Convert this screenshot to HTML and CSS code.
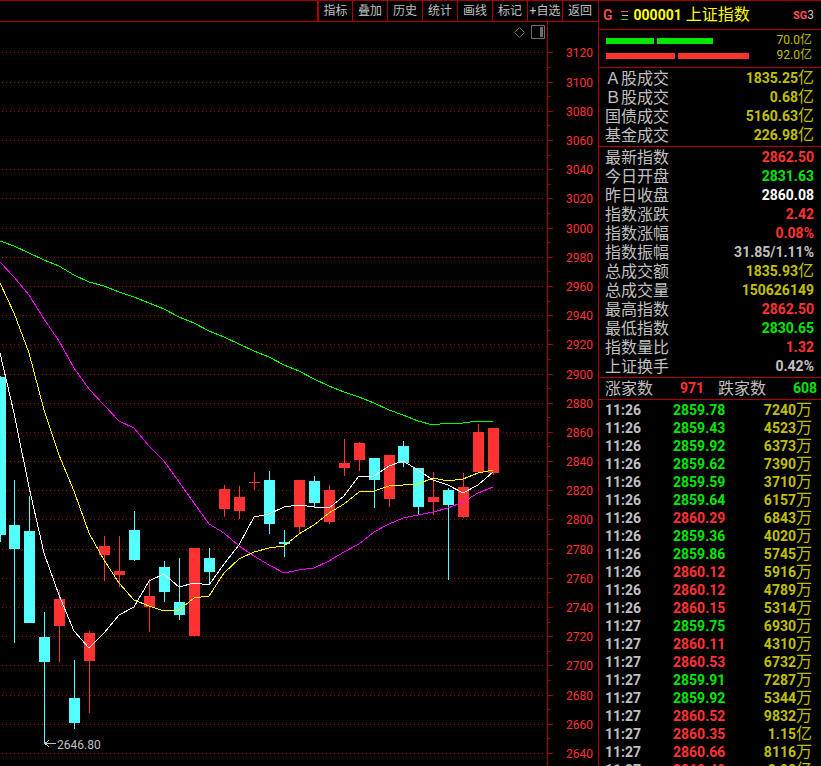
FILE: index.html
```html
<!DOCTYPE html>
<html lang="zh-CN">
<head>
    <meta charset="UTF-8">
    <meta name="viewport" content="width=device-width, initial-scale=1.0">
    <title>000001 上证指数</title>
    <link rel="stylesheet" href="styles.css">
</head>
<body>

<div class="app">
    <main class="main">
        <nav class="toolbar">
            <button>指标</button>
            <button>叠加</button>
            <button>历史</button>
            <button>统计</button>
            <button>画线</button>
            <button>标记</button>
            <button>+自选</button>
            <button>返回</button>
        </nav>
        <div class="chart">
            <svg id="kline" class="kline" viewBox="0 22 598 744" preserveAspectRatio="xMaxYMin meet"></svg>
            <div class="chart-tools">
                <button aria-label="标注">
                    <svg width="11" height="11" viewBox="0 0 11 11"><path d="M5.5 0.5l5 5-5 5-5-5z" fill="none" stroke="#707070"/></svg>
                </button>
                <button aria-label="侧栏">
                    <svg width="14" height="14" viewBox="0 0 14 14"><path d="M.5 .5h13v13H.5z" fill="none" stroke="#707070"/><path d="M9 2h3v10H9z" fill="#707070"/></svg>
                </button>
            </div>
        </div>
    </main>

    <aside class="side">
        <header class="stock">
            <span class="flag">G</span>
            <svg class="menu-icon" width="7" height="9" viewBox="0 0 7 9" shape-rendering="crispEdges">
                <path d="M0 .5h7" stroke="#ff5050"/><path d="M1 4.5h6" stroke="#c0c0c0"/><path d="M0 8.5h7" stroke="#00e600"/>
            </svg>
            <b class="code">000001</b>
            <h1>上证指数</h1>
            <span class="tag"><b>SG</b>3</span>
        </header>

        <section class="power">
            <div class="power-row up-green">
                <div class="bars"><i style="width: 33%"></i><i style="width: 38%"></i></div>
                <span>70.0亿</span>
            </div>
            <div class="power-row up-red">
                <div class="bars"><i style="width: 47%"></i><i style="width: 49%"></i></div>
                <span>92.0亿</span>
            </div>
        </section>

        <table class="quote">
            <tr><th>Ａ股成交</th><td class="yellow">1835.25<span>亿</span></td></tr>
            <tr><th>Ｂ股成交</th><td class="yellow">0.68<span>亿</span></td></tr>
            <tr><th>国债成交</th><td class="yellow">5160.63<span>亿</span></td></tr>
            <tr><th>基金成交</th><td class="yellow">226.98<span>亿</span></td></tr>
        </table>

        <table class="quote">
            <tr><th>最新指数</th><td class="red">2862.50</td></tr>
            <tr><th>今日开盘</th><td class="green">2831.63</td></tr>
            <tr><th>昨日收盘</th><td class="white">2860.08</td></tr>
            <tr><th>指数涨跌</th><td class="red">2.42</td></tr>
            <tr><th>指数涨幅</th><td class="red">0.08%</td></tr>
            <tr><th>指数振幅</th><td>31.85/1.11%</td></tr>
            <tr><th>总成交额</th><td class="yellow">1835.93<span>亿</span></td></tr>
            <tr><th>总成交量</th><td class="yellow">150626149</td></tr>
            <tr><th>最高指数</th><td class="red">2862.50</td></tr>
            <tr><th>最低指数</th><td class="green">2830.65</td></tr>
            <tr><th>指数量比</th><td class="red">1.32</td></tr>
            <tr><th>上证换手</th><td>0.42%</td></tr>
        </table>

        <div class="breadth">
            <span>涨家数</span><b class="red">971</b>
            <span>跌家数</span><b class="green">608</b>
        </div>

        <table class="ticks">
            <tbody id="ticks"></tbody>
        </table>
    </aside>
</div>

<script>
    const chart = document.getElementById('kline');

    // [x, 实体上, 实体下, 影线上, 影线下, 涨跌]
    const candles = [
        [0, 377, 535, 376, 542, 'down'],
        [14, 525, 549, 480, 643, 'down'],
        [29, 531, 623, 496, 623, 'down'],
        [44, 637, 662, 612, 744, 'down'],
        [59, 599, 626, 590, 662, 'up'],
        [74, 698, 723, 660, 729, 'down'],
        [89, 633, 661, 631, 713, 'up'],
        [104, 546, 555, 536, 581, 'up'],
        [119, 571, 575, 536, 587, 'up'],
        [134, 530, 560, 511, 561, 'down'],
        [149, 596, 607, 579, 632, 'up'],
        [164, 567, 592, 561, 602, 'down'],
        [179, 602, 615, 558, 620, 'down'],
        [194, 548, 636, 548, 636, 'up'],
        [209, 558, 572, 548, 585, 'down'],
        [224, 489, 509, 485, 517, 'up'],
        [239, 497, 511, 486, 519, 'up'],
        [254, 482, 483, 472, 490, 'up'],
        [269, 480, 524, 471, 534, 'down'],
        [284, 542, 544, 530, 557, 'down'],
        [299, 480, 527, 480, 534, 'up'],
        [314, 481, 503, 476, 507, 'down'],
        [329, 490, 522, 485, 524, 'up'],
        [344, 463, 468, 439, 476, 'up'],
        [359, 443, 460, 442, 471, 'up'],
        [374, 458, 480, 458, 508, 'down'],
        [389, 455, 499, 455, 507, 'up'],
        [403, 446, 463, 441, 467, 'down'],
        [418, 468, 507, 468, 515, 'down'],
        [433, 497, 502, 472, 515, 'up'],
        [448, 490, 505, 488, 580, 'down'],
        [463, 487, 517, 473, 518, 'up'],
        [478, 432, 472, 424, 472, 'up'],
        [493, 428, 473, 428, 475, 'up']
    ];

    // 均线
    const averages = {
        green: '0,241 14,246 29,253 44,260 59,266 74,275 89,282 104,286 119,292 134,297 149,303 164,309 179,317 194,323 209,331 224,337 239,344 254,351 269,357 284,365 299,371 314,379 329,386 344,392 359,397 374,403 389,410 403,415 418,421 433,425 448,423 463,423 478,421 493,421',
        magenta: '0,262 14,277 29,295 44,319 59,341 74,368 89,389 104,405 119,421 134,428 149,446 164,461 179,482 194,503 209,524 224,533 239,546 254,556 269,565 284,573 299,570 314,568 329,561 344,552 359,544 374,532 389,524 403,518 418,515 433,512 448,508 463,502 478,493 493,487',
        yellow: '0,283 14,313 29,353 44,410 59,455 74,491 89,533 104,560 119,583 134,600 149,606 164,611 179,610 194,598 209,596 224,573 239,559 254,552 269,548 284,546 299,534 314,525 329,513 344,504 359,492 374,491 389,486 403,485 418,484 433,478 448,481 463,479 478,473 493,470',
        white: '0,353 14,413 29,487 44,553 59,595 74,631 89,648 104,633 119,615 134,607 149,581 164,574 179,587 194,583 209,585 224,564 239,545 254,517 269,514 284,507 299,505 314,507 329,508 344,496 359,476 374,476 389,466 403,461 418,470 433,480 448,485 463,493 478,485 493,472'
    };

    function priceToY(price) {
        return Math.floor(52.93 + (3120 - price) * 1.4595);
    }

    function drawChart() {
        let svg = '<path class="axis" d="M547.5 22V766"/>';
        for (let price = 3120; price >= 2640; price -= 20) {
            const y = priceToY(price) + 0.5;
            const half = priceToY(price - 10) + 0.5;
            svg += `<path class="grid" d="M2 ${y}H545"/>`;
            svg += `<path class="axis" d="M548 ${y}h5M548 ${half}h2"/>`;
            svg += `<text class="price" x="593" y="${y + 4.5}">${price}</text>`;
        }
        for (const [x, top, bottom, high, low, type] of candles) {
            svg += `<rect class="${type}" x="${x}" y="${high}" width="1" height="${low - high}"/>`;
            svg += `<rect class="${type}" x="${x - 5}" y="${top}" width="11" height="${bottom - top}"/>`;
        }
        for (const name in averages) {
            svg += `<polyline class="ma ma-${name}" points="${averages[name]}"/>`;
        }
        svg += '<path class="low-arrow" d="M45 743.5h11M49 740l-4 3.5 4 3.5"/>';
        svg += '<text class="low" x="57" y="749">2646.80</text>';
        chart.innerHTML = svg;
    }

    const ticks = [
        ['11:26', '2859.78', '7240万'],
        ['11:26', '2859.43', '4523万'],
        ['11:26', '2859.92', '6373万'],
        ['11:26', '2859.62', '7390万'],
        ['11:26', '2859.59', '3710万'],
        ['11:26', '2859.64', '6157万'],
        ['11:26', '2860.29', '6843万'],
        ['11:26', '2859.36', '4020万'],
        ['11:26', '2859.86', '5745万'],
        ['11:26', '2860.12', '5916万'],
        ['11:26', '2860.12', '4789万'],
        ['11:26', '2860.15', '5314万'],
        ['11:27', '2859.75', '6930万'],
        ['11:27', '2860.11', '4310万'],
        ['11:27', '2860.53', '6732万'],
        ['11:27', '2859.91', '7287万'],
        ['11:27', '2859.92', '5344万'],
        ['11:27', '2860.52', '9832万'],
        ['11:27', '2860.35', '1.15亿'],
        ['11:27', '2860.66', '8116万'],
        ['11:27', '2860.40', '2.93亿']
    ];

    function drawTicks() {
        const lastClose = 2860.08;
        document.getElementById('ticks').innerHTML = ticks.map(([time, price, amount]) => {
            const color = price > lastClose ? 'red' : 'green';
            return `<tr><td>${time}</td><td class="${color}">${price}</td>` +
                `<td class="yellow">${amount.slice(0, -1)}<span>${amount.slice(-1)}</span></td></tr>`;
        }).join('');
    }

    drawChart();
    drawTicks();
</script>

</body>
</html>
```
FILE: styles.css
```css
* {
    box-sizing: border-box;
}
body {
    margin: 0;
    background-color: #000;
    color: #c0c0c0;
    font-family: Roboto, "Noto Sans CJK SC", sans-serif;
    font-size: 14px;
    overflow: hidden;
}
button {
    padding: 0;
    border: none;
    background: none;
    color: inherit;
    font-family: inherit;
    cursor: pointer;
}
.app {
    display: flex;
    height: 100vh;
    border-top: 1px solid #a00000;
}
.main {
    flex: 1;
    min-width: 0;
    display: flex;
    flex-direction: column;
}
.toolbar {
    display: flex;
    justify-content: flex-end;
    height: 21px;
    padding-right: 1px;
    border-bottom: 1px solid #b00000;
}
.toolbar button {
    width: 35px;
    border-left: 1px solid #b00000;
    font-size: 12px;
    line-height: 20px;
    white-space: nowrap;
}
.toolbar button:first-child {
    border-left-width: 2px;
}
.chart {
    position: relative;
    flex: 1;
    min-height: 0;
}
.kline {
    display: block;
    width: 100%;
    shape-rendering: crispEdges;
}
.chart-tools {
    position: absolute;
    top: 3px;
    right: 53px;
    display: flex;
    align-items: center;
    gap: 6px;
}
.chart-tools svg {
    display: block;
}
.axis {
    stroke: #b00000;
}
.grid {
    stroke: #b00000;
    stroke-dasharray: 1 3;
}
.price {
    fill: #ff3232;
    font-size: 12px;
    text-anchor: end;
}
.up {
    fill: #ff3232;
}
.down {
    fill: #54ffff;
}
.ma {
    fill: none;
    stroke-width: 1;
}
.ma-green {
    stroke: #00ff00;
}
.ma-magenta {
    stroke: #ff00ff;
}
.ma-yellow {
    stroke: #ffff00;
}
.ma-white {
    stroke: #ffffff;
}
.low {
    fill: #c0c0c0;
    font-size: 12px;
}
.low-arrow {
    fill: none;
    stroke: #c0c0c0;
}

/* 右侧行情 */
.side {
    width: 223px;
    border-left: 1px solid #b00000;
    overflow: hidden;
}
.stock {
    display: flex;
    align-items: center;
    height: 29px;
    padding: 0 7px 0 4px;
    border-bottom: 1px solid #b00000;
}
.flag {
    color: #ff5050;
    font-weight: 500;
}
.menu-icon {
    margin: 0 6px 0 8px;
}
.code {
    color: #ffff00;
}
.stock h1 {
    margin: 0 0 0 4px;
    color: #ffff00;
    font-size: 16px;
    font-weight: 400;
    line-height: 20px;
}
.tag {
    margin-left: auto;
    font-size: 12px;
}
.tag b {
    color: #ff5050;
    font-size: 11px;
}
.power {
    height: 38px;
    padding: 3px 9px 4px 7px;
    border-bottom: 1px solid #b00000;
}
.power-row {
    display: flex;
    align-items: center;
    justify-content: space-between;
    height: 15px;
    color: #c0c000;
    font-size: 12px;
    line-height: 15px;
}
.bars {
    display: flex;
    gap: 3px;
    width: 146px;
}
.bars i {
    height: 6px;
}
.up-green i {
    background-color: #00e600;
}
.up-red i {
    background-color: #ff3232;
}
table {
    width: 100%;
    border-collapse: collapse;
}
th, td {
    padding: 0;
}
.quote {
    display: block;
    padding: 1px 7px 1px 6px;
    border-bottom: 1px solid #b00000;
}
.quote tbody {
    display: table;
    width: 100%;
}
.quote th {
    height: 19px;
    font-size: 16px;
    font-weight: 400;
    line-height: 19px;
    text-align: left;
}
.quote td {
    font-weight: bold;
    line-height: 19px;
    text-align: right;
}
.quote td span,
.ticks td span {
    font-size: 16px;
    font-weight: 400;
    line-height: 1;
}
.breadth {
    display: grid;
    grid-template-columns: 48px 51px 62px 51px;
    align-items: center;
    height: 22px;
    padding-left: 6px;
    border-bottom: 1px solid #b00000;
    font-size: 16px;
    line-height: 21px;
}
.breadth b {
    font-size: 14px;
    text-align: right;
}
.breadth b + span {
    text-align: right;
}
.ticks {
    margin-top: 1px;
}
.ticks td {
    height: 18px;
    font-weight: bold;
    line-height: 18px;
}
.ticks td:first-child {
    width: 74px;
    padding-left: 6px;
}
.ticks td:last-child {
    padding-right: 9px;
    text-align: right;
}
.red {
    color: #ff3232;
}
.green {
    color: #00e600;
}
.white {
    color: #ffffff;
}
.yellow {
    color: #c0c000;
}
```
